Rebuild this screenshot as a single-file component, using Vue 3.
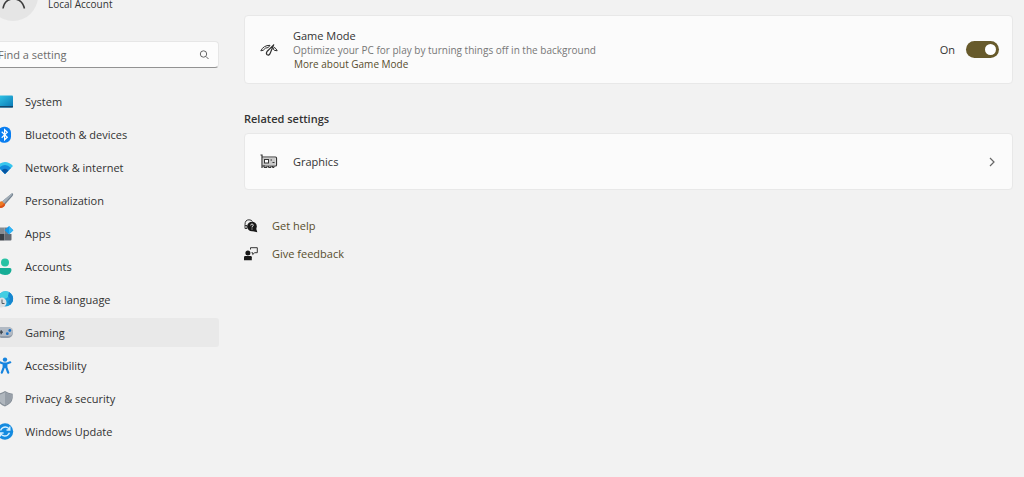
<script setup>
import { ref } from 'vue'

const query = ref('')
const gameMode = ref(true)
const current = ref('Gaming')
const items = [
  'System',
  'Bluetooth & devices',
  'Network & internet',
  'Personalization',
  'Apps',
  'Accounts',
  'Time & language',
  'Gaming',
  'Accessibility',
  'Privacy & security',
  'Windows Update',
]
</script>

<template>
  <div class="settings">
    <aside class="sidebar">
      <div class="account">
        <svg class="avatar" viewBox="0 0 40 21" aria-hidden="true">
          <circle cx="13" cy="-4" r="25" fill="#e5e5e5" />
          <path d="M3 8.500C4 2.500 8-1 13.500-1S23 2.500 24.500 8.500" fill="none" stroke="#3b3b3b" stroke-width="1.500" />
        </svg>
        <span class="account-type">Local Account</span>
      </div>

      <label class="search">
        <input v-model="query" type="text" placeholder="Find a setting" aria-label="Find a setting" />
        <svg viewBox="0 0 12 12" aria-hidden="true">
          <circle cx="5.500" cy="5" r="3.200" />
          <path d="M8 7.500L10.500 10" />
        </svg>
      </label>

      <nav aria-label="Settings">
        <button
          v-for="item in items"
          :key="item"
          type="button"
          :class="['nav-item', { active: item === current }]"
          @click="current = item"
        >
          <svg class="nav-icon" viewBox="0 0 14 18" aria-hidden="true">
            <template v-if="item === 'System'">
              <defs>
                <linearGradient id="screen" x1="0" y1="0" x2="1" y2="1">
                  <stop offset="0" stop-color="#35cbea" /><stop offset="1" stop-color="#0877b5" />
                </linearGradient>
              </defs>
              <rect x="-4" y="2.500" width="17" height="12" rx="1" fill="url(#screen)" />
              <path d="M-4 13H13V14Q13 14.500 12.300 14.500H-4Z" fill="#12476d" />
            </template>
            <template v-else-if="item === 'Bluetooth & devices'">
              <rect x="-2" y="0.700" width="13" height="16" rx="6" fill="#087df0" />
              <path d="M1.700 5.800L7.300 11.200L4.600 13.800V3.700L7.300 6.300L1.700 11.700" fill="none" stroke="#fff" stroke-width="1.200" />
            </template>
            <template v-else-if="item === 'Network & internet'">
              <path d="M-3 7Q5-1 13 7L5 15Z" fill="#36c5ed" />
              <path d="M-1 9Q5 3 11 9L5 15Z" fill="#128bdc" />
              <path d="M1.500 11.500Q5 8 8.500 11.500L5 15Z" fill="#0755a2" />
            </template>
            <template v-else-if="item === 'Personalization'">
              <path d="M12 1.200Q14 1.500 12.500 4L5 12.500L2 9.500Z" fill="#71808f" />
              <path d="M12 1.200Q12.700 2 11.500 3.500L4 11.400L2 9.500Z" fill="#a3aeb8" />
              <path d="M2 9.200L5.200 12.400Q4 16.500-2 16Q1 14-1 11Q0 9 2 9.200" fill="#ef7b22" />
              <path d="M0 14Q3 14 4 11L5.200 12.400Q4 16.500-2 16Z" fill="#d9521c" />
            </template>
            <template v-else-if="item === 'Apps'">
              <path d="M-4 2.500H4.500V9H-4Z" fill="#858b92" />
              <path d="M-4 9H4.500V15.500H-4Z" fill="#393f46" />
              <path d="M4.500 9H11.500V14.500Q11.500 15.500 10.500 15.500H4.500Z" fill="#626972" />
              <path d="M4.500 2.500H8V9H4.500Z" fill="#737b84" />
              <path d="M9 1L13.300 5.300L9 9.600L4.700 5.300Z" fill="#129aed" />
              <path d="M9 1L13.300 5.300L9 9.600Z" fill="#32b5f4" />
            </template>
            <template v-else-if="item === 'Accounts'">
              <circle cx="5" cy="4.500" r="4" fill="#28c2a4" />
              <path d="M-2 10H10Q11.500 10 11.500 12Q11 17 5 17T-2 12Z" fill="#16ad96" />
            </template>
            <template v-else-if="item === 'Time & language'">
              <circle cx="5.500" cy="7.800" r="7.600" fill="#1aa0dc" />
              <path d="M0 2.700Q4-1 9 1L9.500 4L7 7L4 8L0 6Z" fill="#43cee2" />
              <path d="M9 1Q14 4 13 10L10 14L8 11L10 8L8 5Z" fill="#1686cf" />
              <circle cx="1.500" cy="11.500" r="5" fill="#dce0e3" />
              <path d="M2 8.500V12.500H4.500" fill="none" stroke="#4f5c66" />
            </template>
            <template v-else-if="item === 'Gaming'">
              <rect x="-3" y="3" width="16" height="11" rx="5.500" fill="#929ca8" />
              <rect x="-3" y="3" width="16" height="9" rx="4.500" fill="#b2bac4" />
              <path d="M-.500 8.200H3M1.200 6.200V10.200" stroke="#38414a" stroke-width="1.300" />
              <circle cx="9.800" cy="6.500" r="1.400" fill="#176fc4" />
              <circle cx="7.300" cy="9.700" r="1.400" fill="#176fc4" />
            </template>
            <template v-else-if="item === 'Accessibility'">
              <circle cx="5" cy="2.600" r="2.200" fill="#1684df" />
              <path d="M-.200 5.300L3 6.500H7L10.200 5.300M3.700 7V10.500L1.800 15.600M6.300 7V10.500L8.200 15.600" fill="none" stroke="#1684df" stroke-width="2.200" stroke-linecap="round" />
              <path d="M3 6H7V11H3Z" fill="#1684df" />
            </template>
            <template v-else-if="item === 'Privacy & security'">
              <path d="M5 1Q8 3.200 12.700 3.700V8Q12 13.700 5 16.400Q-2 13.700-2.700 8V3.700Q2 3.200 5 1" fill="#858e97" />
              <path d="M5 2.300Q8 4.300 11.700 4.700V8Q11 12.700 5 15.200Q-1 12.700-1.700 8V4.700Q2 4.300 5 2.300" fill="#b0b7be" />
              <path d="M5 2.300Q8 4.300 11.700 4.700V8Q11 12.700 5 15.200Z" fill="#979fa8" />
            </template>
            <template v-else>
              <circle cx="5" cy="8.500" r="8.200" fill="#148be0" />
              <path d="M.500 7.500Q2 4 5.500 4Q8 4 9.500 6.500M9.800 3.500V7H6.500M9.500 9.700Q8 13 4.700 13Q2 13 .500 10.500M.300 13.500V10H3.600" fill="none" stroke="#d5efff" stroke-width="1.400" />
            </template>
          </svg>
          <span>{{ item }}</span>
        </button>
      </nav>
    </aside>

    <main>
      <section class="card game-card">
        <svg class="card-icon" viewBox="0 0 18 18" fill="none" stroke="#303030" stroke-linejoin="round" aria-hidden="true">
          <path d="M3.200 9.300L.800 9.800Q3.500 4.300 10 4.300L8.300 6.500Q5 6.500 3.200 9.300Z" stroke-width="1" />
          <path d="M14.300 6.300Q16.200 7.500 17.200 9.800L14.300 9.300L13.300 8.200Z" stroke-width="1" />
          <path d="M13.700 3.800L7 10.500Q5.700 12.600 7.200 13.800Q9.200 14.700 10.200 12.300L13.700 3.800Z" stroke-width="1.200" />
        </svg>
        <div class="game-text">
          <label class="card-title" for="game-mode">Game Mode</label>
          <span class="description">Optimize your PC for play by turning things off in the background</span>
          <a class="more" href="#game-mode">More about Game Mode</a>
        </div>
        <span class="state">{{ gameMode ? 'On' : 'Off' }}</span>
        <input id="game-mode" v-model="gameMode" class="toggle" type="checkbox" role="switch" />
      </section>

      <h2>Related settings</h2>
      <button class="card graphics-card" type="button">
        <svg class="card-icon" viewBox="0 0 18 18" fill="none" stroke="#343434" aria-hidden="true">
          <path d="M.500 2H2V15M2 4H15.500Q16.500 4 16.500 5V12Q16.500 13 15.500 13H2" stroke-width="1.200" />
          <path d="M3 5H15.500V12H3Z" fill="#c9c9c9" stroke="none" />
          <rect x="4.500" y="6.500" width="4" height="3.500" fill="#fff" />
          <path d="M10.500 7H12M12.500 9.500H14.500M4 12V14.500H7V13M8.500 13V14.500H11V13M12.500 13V14.500H14V13" />
        </svg>
        <span class="graphics-label">Graphics</span>
        <svg class="chevron" viewBox="0 0 8 10" aria-hidden="true"><path d="M2 1L6 5L2 9" /></svg>
      </button>

      <div class="help-links">
        <a href="#help">
          <svg viewBox="0 0 14 14" aria-hidden="true">
            <path d="M1 9.500V5.500Q1 .800 5 .800Q7.500 .800 8.500 2.500M1 6.500H3V9.500H1" fill="none" stroke="#353535" />
            <circle cx="8" cy="7.500" r="4.800" fill="#181818" />
            <path d="M8 12L12 9L13.300 13.300Z" fill="#181818" />
            <path d="M6.700 6.500Q6.700 5 8 5T9.300 6.300Q9.300 7.200 8 7.700V8.500M8 9.500V10.500" fill="none" stroke="#ddd" />
          </svg>
          Get help
        </a>
        <a href="#feedback">
          <svg viewBox="0 0 14 14" aria-hidden="true">
            <circle cx="3.900" cy="5.900" r="2.500" fill="#181818" />
            <path d="M0 10.200Q0 9 1.200 9H6.600Q7.800 9 7.800 10.200V13.200H0Z" fill="#181818" />
            <path d="M6.500 2.500V.700H13.300V5.700H10.700L8.700 7.500V5.700H7.500" fill="none" stroke="#353535" />
          </svg>
          Give feedback
        </a>
      </div>
    </main>
  </div>
</template>

<style>
body {
  background: #f2f2f2;
}
</style>

<style scoped>
.settings {
  display: grid;
  grid-template-columns: 219px 1fr;
  column-gap: 25px;
  font-family: "Open Sans", "Noto Sans", sans-serif;
  font-size: 11px;
  line-height: 14px;
  color: #333;
}
button,
input {
  font: inherit;
  color: inherit;
}
button {
  border: 0;
  text-align: left;
  cursor: pointer;
}
a {
  color: #574d2c;
  text-decoration: none;
}
svg {
  flex: none;
}
.account {
  display: flex;
  gap: 8px;
  height: 41px;
}
.avatar {
  width: 40px;
  height: 21px;
}
.account-type {
  font-size: 10px;
  line-height: 9px;
}
.search {
  display: flex;
  align-items: center;
  box-sizing: border-box;
  height: 27px;
  padding-right: 8px;
  border: 1px solid #e6e6e6;
  border-left: 0;
  border-bottom-color: #929292;
  border-radius: 0 4px 4px 0;
  background: #fcfcfc;
}
.search input {
  flex: 1;
  min-width: 0;
  padding: 0;
  border: 0;
  outline: 0;
  background: none;
  text-indent: -2px;
}
.search input::placeholder {
  color: #6b6b6b;
  opacity: 1;
}
.search svg {
  width: 12px;
  height: 12px;
  fill: none;
  stroke: #666;
}
nav {
  display: flex;
  flex-direction: column;
  gap: 4px;
  margin-top: 19px;
}
.nav-item {
  display: flex;
  align-items: center;
  gap: 11px;
  height: 29px;
  padding: 0;
  border-radius: 0 3px 3px 0;
  background: none;
}
.nav-item.active {
  background: #e9e9e9;
}
.nav-icon {
  width: 14px;
  height: 18px;
}
main {
  padding: 15px 11px 0 0;
}
.card {
  display: flex;
  align-items: center;
  box-sizing: border-box;
  width: 100%;
  padding: 0 13px 0 15px;
  border: 1px solid #e8e8e8;
  border-radius: 4px;
  background: #fbfbfb;
}
.game-card {
  min-height: 69px;
}
.card-icon {
  width: 18px;
  height: 18px;
  margin-right: 15px;
}
.game-text {
  display: flex;
  flex: 1;
  flex-direction: column;
  align-items: flex-start;
}
.description {
  font-size: 10px;
  color: #777;
}
.more {
  padding-left: 1px;
  font-size: 10px;
}
.state {
  margin-right: 11px;
}
.toggle {
  appearance: none;
  display: flex;
  align-items: center;
  box-sizing: border-box;
  width: 33px;
  height: 17px;
  margin: 0;
  padding: 0 3px;
  border-radius: 9px;
  background: #8a8a8a;
  cursor: pointer;
}
.toggle::before {
  content: "";
  width: 11px;
  height: 11px;
  border-radius: 50%;
  background: #fff;
}
.toggle:checked {
  justify-content: flex-end;
  background: #675a2b;
}
h2 {
  margin: 28px 0 7px;
  font-size: 11px;
  line-height: 14px;
  font-weight: 600;
}
.graphics-card {
  min-height: 57px;
}
.graphics-label {
  flex: 1;
}
.chevron {
  width: 8px;
  height: 10px;
  margin-right: 3px;
  fill: none;
  stroke: #666;
  stroke-width: 1.2;
}
.help-links {
  display: flex;
  flex-direction: column;
  align-items: flex-start;
  gap: 14px;
  margin-top: 29px;
}
.help-links a {
  display: flex;
  align-items: center;
  gap: 14px;
}
.help-links svg {
  width: 14px;
  height: 14px;
}
</style>
